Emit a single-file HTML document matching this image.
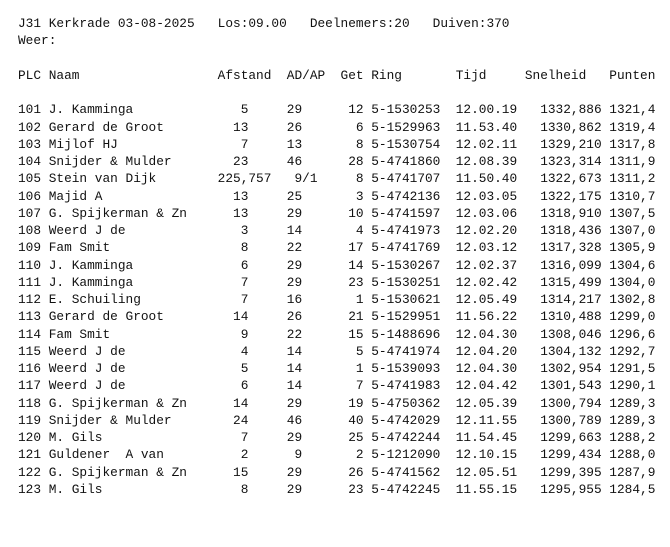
<!DOCTYPE html>
<html><head><meta charset="utf-8"><style>
html,body{margin:0;padding:0;background:#fff;width:670px;height:547px;overflow:hidden}
pre{position:absolute;left:18px;top:15px;margin:0;font-family:"Liberation Mono",monospace;font-size:12.8px;line-height:17.25px;color:#111}
</style></head><body><pre>J31 Kerkrade 03-08-2025   Los:09.00   Deelnemers:20   Duiven:370
Weer:

PLC Naam                  Afstand  AD/AP  Get Ring       Tijd     Snelheid   Punten

101 J. Kamminga              5     29      12 5-1530253  12.00.19   1332,886 1321,4
102 Gerard de Groot         13     26       6 5-1529963  11.53.40   1330,862 1319,4
103 Mijlof HJ                7     13       8 5-1530754  12.02.11   1329,210 1317,8
104 Snijder &amp; Mulder        23     46      28 5-4741860  12.08.39   1323,314 1311,9
105 Stein van Dijk        225,757   9/1     8 5-4741707  11.50.40   1322,673 1311,2
106 Majid A                 13     25       3 5-4742136  12.03.05   1322,175 1310,7
107 G. Spijkerman &amp; Zn      13     29      10 5-4741597  12.03.06   1318,910 1307,5
108 Weerd J de               3     14       4 5-4741973  12.02.20   1318,436 1307,0
109 Fam Smit                 8     22      17 5-4741769  12.03.12   1317,328 1305,9
110 J. Kamminga              6     29      14 5-1530267  12.02.37   1316,099 1304,6
111 J. Kamminga              7     29      23 5-1530251  12.02.42   1315,499 1304,0
112 E. Schuiling             7     16       1 5-1530621  12.05.49   1314,217 1302,8
113 Gerard de Groot         14     26      21 5-1529951  11.56.22   1310,488 1299,0
114 Fam Smit                 9     22      15 5-1488696  12.04.30   1308,046 1296,6
115 Weerd J de               4     14       5 5-4741974  12.04.20   1304,132 1292,7
116 Weerd J de               5     14       1 5-1539093  12.04.30   1302,954 1291,5
117 Weerd J de               6     14       7 5-4741983  12.04.42   1301,543 1290,1
118 G. Spijkerman &amp; Zn      14     29      19 5-4750362  12.05.39   1300,794 1289,3
119 Snijder &amp; Mulder        24     46      40 5-4742029  12.11.55   1300,789 1289,3
120 M. Gils                  7     29      25 5-4742244  11.54.45   1299,663 1288,2
121 Guldener  A van          2      9       2 5-1212090  12.10.15   1299,434 1288,0
122 G. Spijkerman &amp; Zn      15     29      26 5-4741562  12.05.51   1299,395 1287,9
123 M. Gils                  8     29      23 5-4742245  11.55.15   1295,955 1284,5
</pre></body></html>
